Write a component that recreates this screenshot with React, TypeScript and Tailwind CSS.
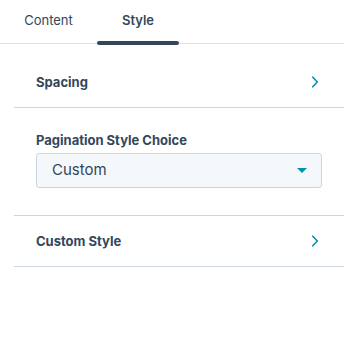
import React, { useState } from 'react';

const tabs = ['Content', 'Style'];

function Chevron() {
    return (
        <svg width="8" height="12" viewBox="0 0 8 12" fill="none" className="shrink-0">
            <path d="M1.8 1.2 L6.3 6 L1.8 10.8" stroke="#0091ae" strokeWidth="1.6" strokeLinecap="round" strokeLinejoin="round" />
        </svg>
    );
}

export default function App() {
    const [active, setActive] = useState('Style');

    return (
        <div className="w-[344px] h-[339px] bg-white text-[#33475b]" style={{ fontFamily: 'Inter, "Noto Sans", sans-serif' }}>
            {/* Tabs */}
            <div className="flex h-[44px] border-b border-[#dfe3eb]">
                {tabs.map(t => (
                    <button
                        key={t}
                        onClick={() => setActive(t)}
                        className={`relative flex items-start justify-center pt-[11px] text-[13px] ${t === 'Content' ? 'w-[97px]' : 'w-[82px]'} ${active === t ? 'font-semibold' : 'font-normal'}`}
                    >
                        {t}
                        {active === t && (
                            <span className="absolute left-0 right-0 bottom-[-2px] h-[4px] rounded-full bg-[#33475b]" />
                        )}
                    </button>
                ))}
            </div>

            <div className="ml-[14px]">
                {/* Spacing */}
                <div className="flex items-center justify-between pl-[22px] pr-[25px] pt-[28px] pb-[15px] border-b border-[#cbd6e2]">
                    <span className="text-[13px] font-bold leading-5">Spacing</span>
                    <Chevron />
                </div>

                {/* Pagination */}
                <div className="pl-[22px] pr-[22px] pt-[22px] pb-[27px] border-b border-[#cbd6e2]">
                    <div className="text-[13px] font-bold leading-5">Pagination Style Choice</div>
                    <div className="mt-[3px] h-[35px] flex items-center justify-between pl-[15px] pr-[14px] bg-[#f5f8fa] border border-[#cbd6e2] rounded-[3px]">
                        <span className="text-[15px]">Custom</span>
                        <svg width="10" height="5" viewBox="0 0 10 5">
                            <path d="M0 0 L10 0 L5 5 Z" fill="#0091ae" />
                        </svg>
                    </div>
                </div>

                {/* Custom Style */}
                <div className="flex items-center justify-between pl-[22px] pr-[25px] pt-[15px] pb-[15px] border-b border-[#cbd6e2]">
                    <span className="text-[13px] font-bold leading-5">Custom Style</span>
                    <Chevron />
                </div>
            </div>
        </div>
    );
}
